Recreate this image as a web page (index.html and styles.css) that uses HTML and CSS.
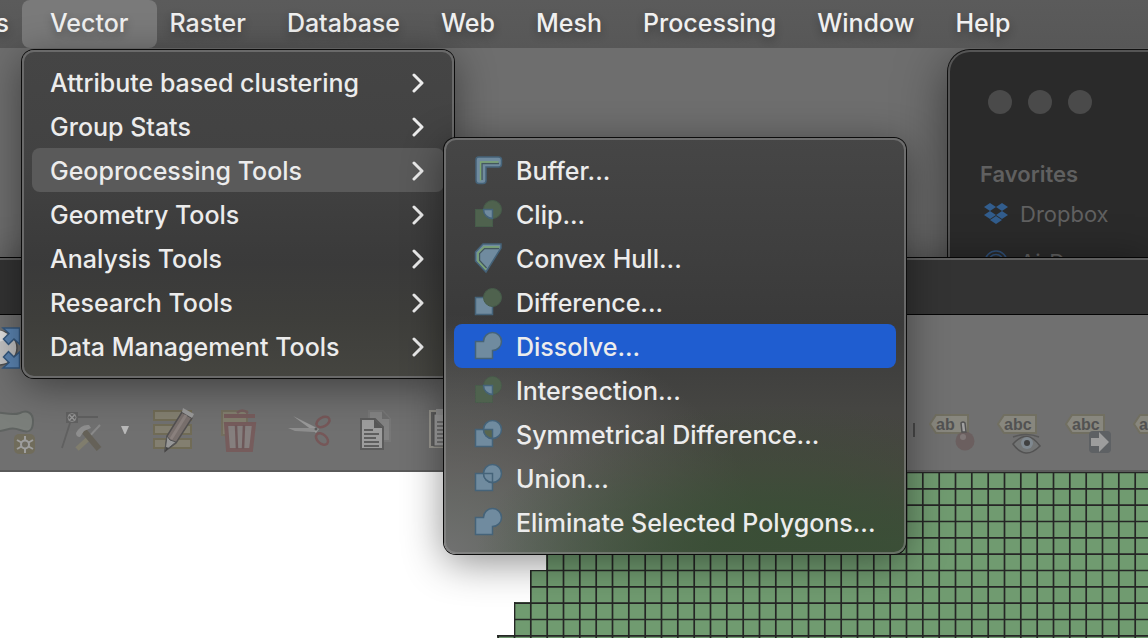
FILE: index.html
```html
<!DOCTYPE html>
<html lang="en">
<head>
<meta charset="utf-8">
<title>QGIS</title>
<link rel="stylesheet" href="styles.css">
</head>
<body>
<div class="desktop">

  <section class="finder" aria-label="Finder">
    <div class="lights"><span class="light"></span><span class="light"></span><span class="light"></span></div>
    <h2 class="finder-title">Favorites</h2>
    <ul class="finder-list">
      <li class="finder-row">
        <svg class="finder-icon" viewBox="0 0 24 22"><path fill="#325d8d" d="M6 0l6 4-6 4-6-4zM18 0l6 4-6 4-6-4zM6 8l6 4-6 4-6-4zM18 8l6 4-6 4-6-4zM12 13l6 4-6 4-6-4z"/></svg>
        <span>Dropbox</span>
      </li>
      <li class="finder-row">
        <svg class="finder-icon" viewBox="0 0 24 22" fill="none" stroke="#2f5079" stroke-width="1.6"><circle cx="12" cy="11" r="11"/><circle cx="12" cy="11" r="7.500"/><circle cx="12" cy="11" r="4"/></svg>
        <span>AirDrop</span>
      </li>
    </ul>
  </section>

  <section class="qgis" aria-label="QGIS">
    <div class="titlebar"></div>
    <div class="toolbars">
      <div class="toolbar toolbar-top">
        <button class="tool-full" aria-label="Zoom full">
          <svg viewBox="0 0 20 42" width="20" height="42">
            <ellipse cx="-1" cy="21" rx="18" ry="17" fill="#c4c4c4" stroke="#505050" stroke-width="1.500"/>
            <ellipse cx="-4" cy="9" rx="11" ry="6" fill="#e0e0e0"/>
            <g fill="#5c86b4" stroke="#34587f" stroke-width="1.500"><path d="M3 1H19.500V17L14 12 8.500 17.500 3.500 12 9 6.500z"/><path d="M3 41H19.500V25L14 30 8.500 24.500 3.500 30 9 35.500z"/></g>
          </svg>
        </button>
      </div>
      <div class="toolbar toolbar-edit">
        <div class="tools">
          <button class="tool" aria-label="Add polygon">
            <svg viewBox="0 0 48 48">
              <path d="M-2 7C10 4 20 11 30 7C38 3 43 8 43 15C43 26 38 27 30 24C22 21 20 23 10 25H-2z" fill="#7f857f" stroke="#5a5f5c" stroke-width="2"/>
              <rect x="24" y="28" width="21" height="20" rx="5" fill="#716b54"/>
              <path d="M35 30V47M27 34L43 43M27 43L43 34" stroke="#aeaeae" stroke-width="2"/><circle cx="35" cy="38.500" r="4" fill="#716d5e" stroke="#aeaeae" stroke-width="2"/>
            </svg>
          </button>
          <button class="tool" aria-label="Vertex tool">
            <svg viewBox="0 0 48 48">
              <path d="M13 11H40M12 17L4 42" stroke="#5b5b5b" stroke-width="1.800"/>
              <rect x="8" y="6" width="12" height="11" fill="#5c5c5c"/><path d="M11 8.500l6 6M17 8.500l-6 6" stroke="#a3a3a3" stroke-width="1.500"/><circle cx="14" cy="11.500" r="4" fill="none" stroke="#999" stroke-width="1"/>
              <path d="M42 19L28 34" stroke="#929292" stroke-width="2"/><path d="M31 32L19 43" stroke="#86826d" stroke-width="5"/>
              <path d="M26 25L41 43" stroke="#625d50" stroke-width="6"/><path d="M18 27Q23 18 31 19L33 22 26 25 22 31Q18 31 18 27z" fill="#999"/>
            </svg>
          </button>
          <button class="drop" aria-label="Vertex tool options"><svg viewBox="0 0 10 8" width="10" height="8"><path d="M1 0H9L5.500 8H4.500z" fill="#b9b9b9"/></svg></button>
          <button class="tool" aria-label="Modify attributes">
            <svg viewBox="0 0 48 48">
              <g fill="#8a8570" stroke="#706a4e" stroke-width="2"><rect x="7" y="5" width="37" height="9"/><rect x="7" y="19" width="37" height="9"/><rect x="7" y="33" width="37" height="9"/></g>
              <path d="M35 6L45 12 29 37 18 45 20 30z" fill="#7c706c" stroke="#484545" stroke-width="1.500"/><path d="M39 9L24 33" stroke="#938682" stroke-width="3"/>
              <path d="M20 30L23 34 29 36 18 45z" fill="#a4a4a4" stroke="#484848"/><path d="M36 2L47 8 45 12 35 6z" fill="#a8a8a8"/><path d="M19 41L18 46 22 42z" fill="#333"/>
            </svg>
          </button>
          <button class="tool" aria-label="Delete selected">
            <svg viewBox="0 0 48 48">
              <rect x="7" y="5" width="25" height="24" fill="#88836e" stroke="#746e59" stroke-width="2"/>
              <path d="M22 7Q27 2 33 7" fill="none" stroke="#785858" stroke-width="2.500"/><path d="M9 10H40" stroke="#785656" stroke-width="4"/>
              <path d="M11 18H39L36 44H13z" fill="#8c8483" stroke="#785656" stroke-width="4"/><path d="M21 19L22 43M29 19L28 43" stroke="#6e5152" stroke-width="2.500"/>
            </svg>
          </button>
          <button class="tool" aria-label="Cut">
            <svg viewBox="0 0 48 48">
              <path d="M10 10L36 23 33 27z" fill="#a6a6a6"/><path d="M5 22L34 22 31 26 12 25z" fill="#999"/>
              <g fill="none" stroke="#784f50" stroke-width="2.500"><ellipse cx="40" cy="16" rx="7" ry="4.500" transform="rotate(-28 40 16)"/><ellipse cx="39" cy="33" rx="7" ry="4.500" transform="rotate(42 39 33)"/></g>
              <circle cx="33" cy="23" r="1.500" fill="#555"/>
            </svg>
          </button>
          <button class="tool" aria-label="Copy">
            <svg viewBox="0 0 48 48">
              <path d="M18 5H32L39 13V35H18z" fill="#8a8a8a" stroke="#7a7a7a" stroke-width="2"/><path d="M31 5L39 13H31z" fill="#6d6d6d"/>
              <path d="M10 13H24L32 21V43H10z" fill="#acacac" stroke="#555" stroke-width="2"/><path d="M23 13V22H32z" fill="#505050"/>
              <path d="M13 24H22M13 28H28M13 32H25M13 36H28M13 40H28" stroke="#595959" stroke-width="1.800"/>
            </svg>
          </button>
          <button class="tool" aria-label="Paste">
            <svg viewBox="0 0 48 48">
              <rect x="11" y="5" width="30" height="36" fill="#5d5d5d" stroke="#a8a69c" stroke-width="2"/><rect x="15" y="8" width="24" height="32" fill="#b0b0b0" stroke="#4c4c4c"/><rect x="17" y="3" width="16" height="6" fill="#a6a6a6"/>
              <path d="M18 16H36M18 20H36M18 24H36M18 28H36M18 32H36M18 36H36" stroke="#606060" stroke-width="1.600"/>
            </svg>
          </button>
        </div>
        <div class="tools tools-label">
          <button class="tool" aria-label="Pin labels">
            <svg viewBox="0 0 48 48">
              <path d="M5 14L11 5H43V23H11z" fill="#918f83" stroke="#726f5c" stroke-width="2"/><text class="tag" x="11" y="20">ab</text>
              <circle cx="40" cy="31" r="9.500" fill="#6a5a5a"/><circle cx="38" cy="27" r="3" fill="#857a7a"/><path d="M36 13Q38 11 40 13L41 22H37z" fill="#b2b2b2" stroke="#484848" stroke-width="1.500"/>
            </svg>
          </button>
          <button class="tool" aria-label="Show labels">
            <svg viewBox="0 0 48 48">
              <path d="M5 14L11 5H43V23H11z" fill="#918f83" stroke="#726f5c" stroke-width="2"/><text class="tag" x="11" y="20">abc</text>
              <path d="M20 34Q34 18 47 36Q32 51 20 34z" fill="#757777" stroke="#4a4a4a" stroke-width="1.500"/><path d="M20 27Q33 22 46 27" fill="none" stroke="#505050" stroke-width="1.500"/><circle cx="34" cy="33" r="6" fill="#84909a"/><circle cx="34" cy="33" r="3" fill="#303030"/>
            </svg>
          </button>
          <button class="tool" aria-label="Move label">
            <svg viewBox="0 0 48 48">
              <path d="M5 14L11 5H43V23H11z" fill="#918f83" stroke="#726f5c" stroke-width="2"/><text class="tag" x="11" y="20">abc</text>
              <rect x="28" y="21" width="22" height="22" rx="4" fill="#585c60"/><path d="M30 28H38V22L48 32 38 42V36H30z" fill="#acacac"/>
            </svg>
          </button>
          <button class="tool" aria-label="Rotate label">
            <svg viewBox="0 0 48 48"><path d="M5 14L11 5H43V23H11z" fill="#918f83" stroke="#726f5c" stroke-width="2"/><text class="tag" x="10" y="20">a</text></svg>
          </button>
        </div>
      </div>
    </div>
    <div class="canvas">
      <svg class="layer" width="100%" height="100%">
        <defs>
          <pattern id="cells" x="546" y="-1" width="49" height="49" patternUnits="userSpaceOnUse">
            <rect width="49" height="49" fill="#709b70"/>
            <path d="M1.200 0V49M17.500 0V49M33.800 0V49M0 1.500H49M0 17.800H49M0 34.100H49" stroke="#252625" stroke-width="1.700"/>
          </pattern>
        </defs>
        <g fill="url(#cells)">
          <rect x="546" y="0" width="100%" height="100%"/>
          <rect x="530" y="98" width="100%" height="100%"/>
          <rect x="514" y="130" width="100%" height="100%"/>
          <rect x="497" y="163" width="100%" height="100%"/>
        </g>
      </svg>
    </div>
  </section>

  <nav class="menubar" aria-label="Menu bar">
    <button class="bar-item bar-cut" aria-label="Plugins">s</button>
    <button class="bar-item bar-open" aria-expanded="true">Vector</button>
    <button class="bar-item">Raster</button>
    <button class="bar-item">Database</button>
    <button class="bar-item">Web</button>
    <button class="bar-item">Mesh</button>
    <button class="bar-item">Processing</button>
    <button class="bar-item">Window</button>
    <button class="bar-item">Help</button>
  </nav>

  <div class="menu menu-vector" role="menu" aria-label="Vector">
    <button class="item" role="menuitem"><span>Attribute based clustering</span><svg class="chev" viewBox="0 0 12 20"><path d="M2 2l8 8-8 8"/></svg></button>
    <button class="item" role="menuitem"><span>Group Stats</span><svg class="chev" viewBox="0 0 12 20"><path d="M2 2l8 8-8 8"/></svg></button>
    <button class="item item-open" role="menuitem"><span>Geoprocessing Tools</span><svg class="chev" viewBox="0 0 12 20"><path d="M2 2l8 8-8 8"/></svg></button>
    <button class="item" role="menuitem"><span>Geometry Tools</span><svg class="chev" viewBox="0 0 12 20"><path d="M2 2l8 8-8 8"/></svg></button>
    <button class="item" role="menuitem"><span>Analysis Tools</span><svg class="chev" viewBox="0 0 12 20"><path d="M2 2l8 8-8 8"/></svg></button>
    <button class="item" role="menuitem"><span>Research Tools</span><svg class="chev" viewBox="0 0 12 20"><path d="M2 2l8 8-8 8"/></svg></button>
    <button class="item" role="menuitem"><span>Data Management Tools</span><svg class="chev" viewBox="0 0 12 20"><path d="M2 2l8 8-8 8"/></svg></button>
  </div>

  <div class="menu menu-geo" role="menu" aria-label="Geoprocessing Tools">
    <button class="item" role="menuitem"><svg class="ico" viewBox="0 0 28 28"><path class="blue" d="M4.500 0H24.500Q27.500 0 27.500 3V7Q27.500 10 24.500 10H12V23.500Q12 26.500 9 26.500H5Q2 26.500 2 23.500V3Q2 0 4.500 0z"/><path class="shade" d="M8 23V6.500H25"/><path class="line" d="M6.500 23.500V5H24.500"/></svg><span>Buffer...</span></button>
    <button class="item" role="menuitem"><svg class="ico" viewBox="0 0 28 28"><rect class="green" x="1.500" y="8.500" width="17" height="17"/><circle class="green" cx="18.500" cy="8.500" r="9"/><path class="blue" d="M9.500 8.500H18.500V17.500A9 9 0 0 1 9.500 8.500z"/></svg><span>Clip...</span></button>
    <button class="item" role="menuitem"><svg class="ico" viewBox="0 0 28 28"><path class="blue" d="M9 -1H27V3L12 27 1.500 16V7z"/><path class="shade" d="M25 3.500H10.500L5.500 8.500V15.500L12.500 23"/><path class="line" d="M25.500 2H10L4 8V16L12 24.500"/></svg><span>Convex Hull...</span></button>
    <button class="item" role="menuitem"><svg class="ico" viewBox="0 0 28 28"><rect class="blue" x="1.500" y="8.500" width="17" height="17"/><circle class="green" cx="18.500" cy="8.500" r="9"/></svg><span>Difference...</span></button>
    <button class="item item-active" role="menuitem"><svg class="ico" viewBox="0 0 28 28"><path class="blue" d="M1.500 8.500H9.500A9 9 0 1 1 18.500 17.500V25.500H1.500z"/></svg><span>Dissolve...</span></button>
    <button class="item" role="menuitem"><svg class="ico" viewBox="0 0 28 28"><rect class="green dash" x="1.500" y="8.500" width="17" height="17"/><circle class="green dash" cx="18.500" cy="8.500" r="9"/><path class="blue" d="M9.500 8.500H18.500V17.500A9 9 0 0 1 9.500 8.500z"/></svg><span>Intersection...</span></button>
    <button class="item" role="menuitem"><svg class="ico" viewBox="0 0 28 28"><rect class="blue" x="1.500" y="8.500" width="17" height="17"/><circle class="blue" cx="18.500" cy="8.500" r="9"/><path class="blue hole" d="M9.500 8.500H18.500V17.500A9 9 0 0 1 9.500 8.500z"/></svg><span>Symmetrical Difference...</span></button>
    <button class="item" role="menuitem"><svg class="ico" viewBox="0 0 28 28"><rect class="blue" x="1.500" y="8.500" width="17" height="17"/><circle class="blue" cx="18.500" cy="8.500" r="9"/><path class="blue" d="M9.500 8.500H18.500V17.500A9 9 0 0 1 9.500 8.500z"/></svg><span>Union...</span></button>
    <button class="item" role="menuitem"><svg class="ico" viewBox="0 0 28 28"><path class="blue" d="M1.500 8.500H9.500A9 9 0 1 1 18.500 17.500V25.500H1.500z"/></svg><span>Eliminate Selected Polygons...</span></button>
  </div>
</div>
</body>
</html>
```

FILE: styles.css
```css
* { box-sizing: border-box; }

body {
  margin: 0;
  font-family: Inter, "Liberation Sans", sans-serif;
  color: #ececec;
}

button {
  margin: 0;
  padding: 0;
  border: 0;
  background: none;
  color: inherit;
  font: inherit;
  text-align: left;
}

.desktop {
  position: relative;
  min-height: 100vh;
  overflow: hidden;
  background: #6e6e6e;
}

/* Menu bar */
.menubar {
  position: relative;
  display: flex;
  gap: 1px;
  height: 48px;
  overflow: hidden;
  background: linear-gradient(#5b5b5b, #575757);
}

.bar-item {
  flex: none;
  padding: 0 20px 2px;
  border-radius: 8px;
  font-size: 25px;
  font-weight: 500;
  line-height: 46px;
  color: #f0f0f0;
  text-shadow: 0 4px 8px rgba(0, 0, 0, .3);
}

.bar-cut {
  display: flex;
  justify-content: flex-end;
  width: 29px;
  padding: 0 20px 2px 0;
}

.bar-open {
  margin: 0 -8px;
  padding: 0 28px 2px;
  background: #7a7a7a;
}

/* Menus */
.menu {
  position: absolute;
  padding: 10px;
  border-radius: 12px;
  font-size: 25px;
  font-weight: 500;
}

.menu-vector {
  top: 50px;
  left: 22px;
  width: 432px;
  background: linear-gradient(#454545, #424242 35%, #3a3a3a 65%, #3e3e3b 82%, #454540);
  box-shadow: inset 0 0 0 2px #6a6a6a, 0 0 0 1px #0c0c0c, 0 8px 40px rgba(0, 0, 0, .45);
}

.menu-geo {
  top: 138px;
  left: 444px;
  width: 462px;
  background:
    radial-gradient(ellipse 300px 150px at 72% 100%, rgba(58, 78, 54, .9) 20%, rgba(58, 78, 54, 0)),
    radial-gradient(ellipse 320px 240px at 0 100%, #717171, rgba(113, 113, 113, 0)),
    linear-gradient(#464646, #3a3a3a 45%, #454542 65%, #484640 80%, #3c5038);
  box-shadow: inset 0 0 0 2px rgba(150, 150, 150, .5), 0 0 0 1px #0c0c0c, 0 8px 40px rgba(0, 0, 0, .45);
}

.item {
  display: flex;
  align-items: center;
  width: 100%;
  height: 44px;
  padding: 2px 20px 0 18px;
  border-radius: 8px;
  white-space: nowrap;
}

.menu-geo .item { gap: 14px; padding-left: 20px; }

.item-open { background: #5a5a5a; }
.item-active { background: #1f5dd0; }

.chev {
  width: 12px;
  height: 20px;
  margin-left: auto;
  fill: none;
  stroke: #ececec;
  stroke-width: 3;
  stroke-linecap: round;
  stroke-linejoin: round;
}

.ico {
  flex: none;
  width: 28px;
  height: 28px;
  overflow: visible;
}

.blue { fill: #708b9f; stroke: #456379; stroke-width: 1.5; }
.green { fill: #4f624e; stroke: #465c4a; stroke-width: 1; }
.dash { stroke-dasharray: 2 1; }
.hole { fill: #59664f; }
.line { fill: none; stroke: #7ca670; stroke-width: 1.4; }
.shade { fill: none; stroke: #43575e; stroke-width: 1.4; }

/* Finder window */
.finder {
  position: absolute;
  top: 50px;
  right: -300px;
  left: 948px;
  height: 400px;
  padding: 40px 32px;
  border-radius: 22px;
  background: #2a2a2a;
  box-shadow: inset 0 0 0 2px #555, 0 0 0 1px #101010, 0 12px 50px rgba(0, 0, 0, .5);
  color: #606060;
  font-size: 22px;
}

.lights { display: flex; gap: 16px; padding-left: 8px; }

.light {
  width: 24px;
  height: 24px;
  border-radius: 50%;
  background: #4a4a4a;
}

.finder-title {
  margin: 44px 0 0;
  font-size: 22px;
  line-height: 32px;
  font-weight: 600;
}

.finder-list { margin: 0; padding: 0; list-style: none; }

.finder-row {
  display: flex;
  align-items: center;
  gap: 12px;
  height: 48px;
  padding-left: 4px;
}

.finder-icon { width: 24px; height: 22px; overflow: visible; }

/* QGIS window */
.qgis {
  position: absolute;
  top: 258px;
  right: 0;
  bottom: 0;
  left: 0;
  display: flex;
  flex-direction: column;
  box-shadow: 0 0 0 1px #050505, 0 0 36px rgba(0, 0, 0, .35);
}

.titlebar {
  height: 57px;
  border-top: 2px solid #5e5e5e;
  border-bottom: 1px solid #050505;
  background: #333;
}

.toolbars {
  padding: 12px 0 10px;
  border-bottom: 2px solid #5a5a5a;
  background: #707070;
}

.toolbar { display: flex; }
.toolbar-top { height: 73px; }
.tool-full { width: 20px; height: 42px; }

.tools {
  display: flex;
  flex: none;
  align-items: center;
  gap: 20px;
  height: 60px;
}

.toolbar-edit { overflow: hidden; }
.toolbar-edit .tools:first-child { margin-left: -10px; }

.tool { flex: none; width: 48px; height: 48px; }
.tool svg { display: block; width: 48px; height: 48px; overflow: visible; opacity: .75; }

.drop {
  display: flex;
  flex: none;
  justify-content: center;
  width: 22px;
  margin: 0 -9px 0 -12px;
}

.tools-label { margin-left: 446px; padding-top: 8px; }

.tools-label::before {
  content: "";
  width: 2px;
  height: 14px;
  margin: 0 -10px 8px 0;
  background: #484848;
}

.tag {
  font: bold 16px "Liberation Sans", sans-serif;
  fill: #484848;
}

.canvas { flex: 1; min-height: 0; background: #fff; }
.layer { display: block; overflow: hidden; }
```
